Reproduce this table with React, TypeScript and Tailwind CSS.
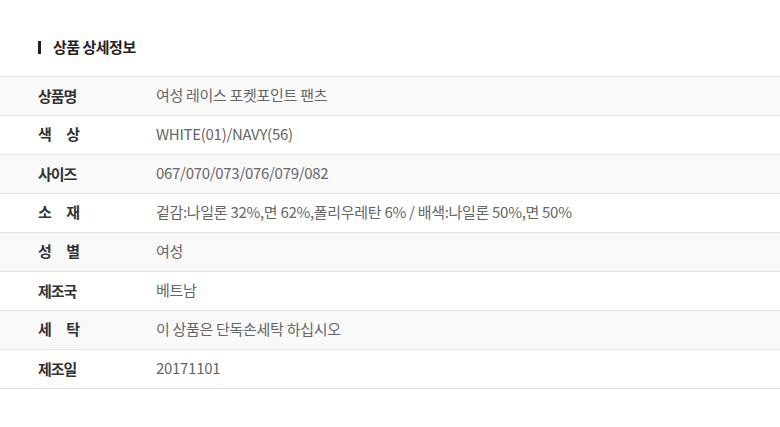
const rows: { label: string[]; value: string }[] = [
  { label: ["상품명"], value: "여성 레이스 포켓포인트 팬츠" },
  { label: ["색", "상"], value: "WHITE(01)/NAVY(56)" },
  { label: ["사이즈"], value: "067/070/073/076/079/082" },
  { label: ["소", "재"], value: "겉감:나일론 32%,면 62%,폴리우레탄 6% / 배색:나일론 50%,면 50%" },
  { label: ["성", "별"], value: "여성" },
  { label: ["제조국"], value: "베트남" },
  { label: ["세", "탁"], value: "이 상품은 단독손세탁 하십시오" },
  { label: ["제조일"], value: "20171101" },
];

const App = () => {
  return (
    <div className="w-[780px] h-[427px] bg-white font-['Noto_Sans_CJK_KR','Noto_Sans',sans-serif] overflow-hidden">
      <div className="flex items-center gap-3 pl-[38px] pt-[37px] h-[76px] pb-[19px]">
        <span className="w-[3px] h-[13px] bg-[#222]" />
        <h1 className="text-[15px] font-bold text-[#222] tracking-[-0.5px]">상품 상세정보</h1>
      </div>
      <div className="border-t border-[#e2e2e2]">
        {rows.map((row, i) => (
          <div
            key={i}
            className={`flex items-center h-[39px] pb-[2px] border-b border-[#e2e2e2] ${i % 2 === 0 ? "bg-[#f9f9f9]" : "bg-white"}`}
          >
            <div className="w-[156px] pl-[38px] shrink-0">
              {row.label.length > 1 ? (
                <span className="flex justify-between w-[42px] text-[15px] font-bold text-[#333]">
                  {row.label.map((c) => (
                    <span key={c}>{c}</span>
                  ))}
                </span>
              ) : (
                <span className="text-[15px] font-bold text-[#333] tracking-[-1px]">{row.label[0]}</span>
              )}
            </div>
            <div className="text-[15px] text-[#666] tracking-[-0.3px]">{row.value}</div>
          </div>
        ))}
      </div>
    </div>
  );
};

export default App;
